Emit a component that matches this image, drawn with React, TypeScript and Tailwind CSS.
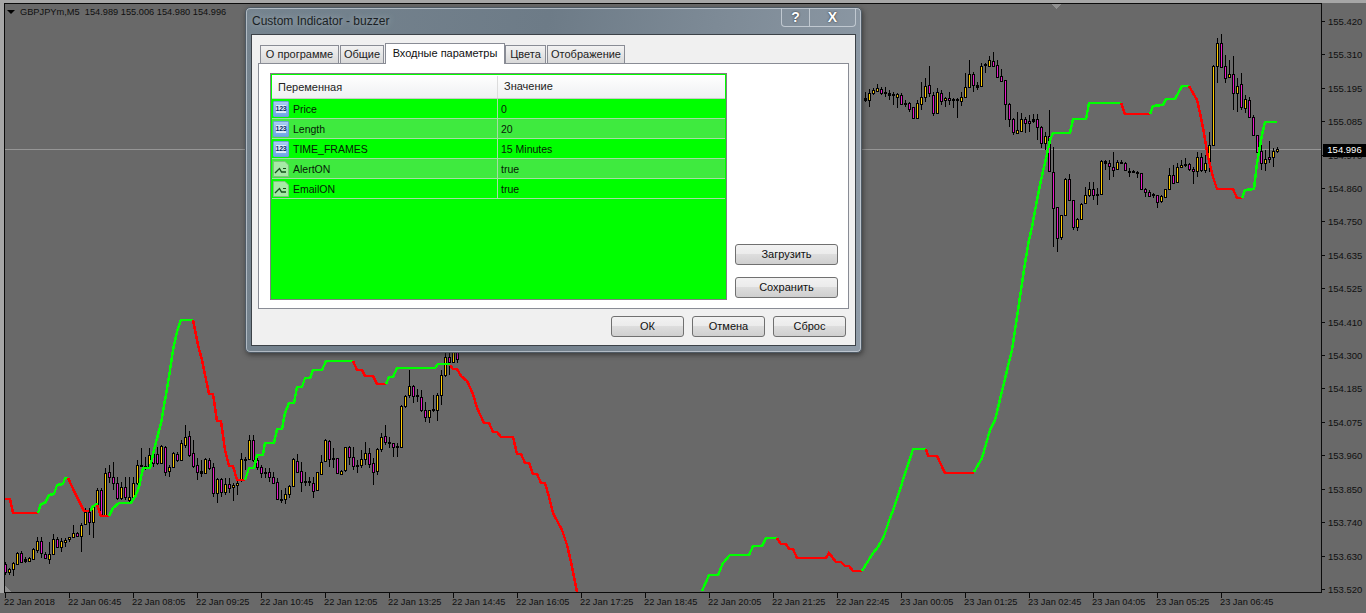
const font = "font-['Liberation_Sans',Arial,sans-serif]";

// candles as "wickTop bodyTop bodyBottom wickBottom colour", read off the chart in 3x zoom units
const leftCandles = `785 793 815 825 m,805 808 816 825 y,785 790 808 828 y,755 760 792 795 y,752 760 785 788 m,770 778 782 788 d,770 775 782 785 y,745 748 778 780 y,712 724 750 760 y,712 724 760 775 m,755 763 775 778 m,725 763 776 792 y,702 718 763 765 y,710 718 742 745 m,715 724 742 755 y,715 720 725 740 y,710 712 716 725 y,675 700 712 715 y,695 700 707 710 m,670 674 708 755 y,625 635 672 675 y,625 637 667 705 m,615 620 667 715 y,565 570 618 620 y,565 570 645 648 m,505 520 645 645 y,495 517 530 550 m,487 532 550 570 m,530 550 595 600 m,545 560 595 600 y,530 562 590 600 m,530 590 600 605 y,530 550 590 600 y,480 495 550 555 y,445 495 497 497 d,470 497 503 510 y,445 465 503 505 y,445 462 488 500 m,440 462 488 495 m,435 438 488 490 y,438 440 515 528 m,495 502 512 530 y,455 460 502 505 y,455 462 480 485 m,420 430 480 482 y,375 412 435 445 y,392 408 465 470 m,420 460 497 505 m,475 495 515 540 m,480 514 518 530 d,475 478 518 520 y,475 480 505 510 m,490 502 580 590 m,535 538 578 608 y,535 538 575 590 m,535 552 575 585 y,535 552 565 580 m,550 556 562 602 y,535 550 556 585 y,460 478 540 545 y,470 476 480 510 d,405 420 476 480 y,405 420 480 485 m,465 480 500 510 m,495 502 520 535 m,505 517 520 535 d,505 517 530 545 m,515 530 548 550 m,535 547 598 600 m,570 597 600 608 d,565 583 597 612 y,555 558 583 595 y,475 478 558 560 y,462 482 515 515 m,485 512 545 575 m,515 544 547 558 d,530 544 547 558 d,530 550 572 595 m,515 517 570 572 y,465 485 522 525 y,418 420 482 485 y,420 422 477 500 m,445 475 478 505 d,475 475 520 522 m,510 512 522 525 y,440 442 510 515 y,438 440 470 495 m,440 470 498 510 m,480 495 498 518 d,450 478 495 505 y,425 460 478 495 y,445 460 493 505 m,475 490 515 555 m,445 448 512 525 y,400 412 448 455 y,375 408 425 435 m,410 427 430 445 d,430 430 442 472 m,430 438 441 470 d,315 317 440 442 y,285 287 317 325 y,210 257 285 295 y,255 258 288 310 m,268 286 289 305 d,270 292 330 335 m,305 330 352 365 m,330 330 352 368 y,285 328 331 335 d,280 285 330 362 y,210 225 285 315 y,160 170 225 230 y,150 170 185 225 m,140 150 185 190 y,140 150 178 190 m`;

const midCandles = `125 145 149 155 d,118 130 150 170 y,115 120 130 135 y,102 115 122 125 y,110 118 128 135 m,112 126 128 140 d,120 130 135 150 d,125 132 136 165 d,130 133 140 175 y,130 135 162 165 m,150 160 163 172 d,155 160 176 185 m,170 172 205 208 m,150 160 205 208 y,95 140 163 180 y,85 107 140 155 y,48 105 130 140 m,125 135 190 198 m,115 127 190 192 y,120 130 152 165 m,140 144 150 170 y,125 145 151 165 m,145 148 150 175 d,145 147 150 205 d,125 142 152 168 y,70 112 142 145 y,30 72 112 115 y,65 72 106 125 m,95 105 110 120 d,40 48 107 110 y,40 42 45 70 d,18 30 47 50 y,5 33 47 50 m,30 45 80 82 m`;

const rightCandles = `207 228 242 245 m,240 240 313 360 m,310 313 358 382 m,355 358 395 405 m,335 390 398 402 y,340 358 392 395 y,350 358 368 400 m,345 362 368 395 m,342 358 362 370 d,342 358 380 420 m,378 380 428 445 m,395 408 428 450 y,330 408 512 512 m,440 517 625 742 m,620 622 715 755 m,645 645 710 720 y,535 538 645 648 y,522 538 600 600 m,600 600 680 690 m,655 658 680 692 y,610 612 658 660 y,560 585 610 610 y,545 568 585 590 y,545 568 585 600 m,565 582 585 615 d,480 484 583 585 y,480 484 488 510 d,480 488 498 540 m,455 500 510 530 m,480 487 508 510 y,480 485 488 492 d,485 488 510 512 m,505 512 514 530 d,510 512 516 520 m,512 516 520 535 m,518 520 568 570 m,565 568 575 590 m,570 575 588 592 m,580 582 585 595 d,585 585 605 625 m,585 588 604 608 y,568 568 592 595 y,505 525 568 570 y,495 525 548 550 m,490 500 545 548 y,480 496 500 505 y,475 492 495 500 d,490 492 508 512 m,500 508 514 552 m,455 472 512 530 y,460 472 510 515 m,465 490 510 520 y,395 435 485 515 y,195 198 435 438 y,115 130 198 248 y,102 130 202 205 m,165 198 235 248 m,180 222 232 235 y,168 222 280 330 m,235 258 280 335 y,220 252 322 330 m,285 298 325 340 y,290 300 352 355 m,345 352 405 408 m,405 405 455 480 m,420 453 490 510 m,450 478 490 512 y,422 472 478 490 m,445 453 472 500 y,440 448 454 460 y`;

type Candle = { x: number; wt: number; bt: number; bb: number; wb: number; c: string };

const parse = (src: string, start: number, toY: (z: number) => number): Candle[] =>
  src.split(",").map((item, i) => {
    const p = item.split(" ");
    return {
      x: 5 + 4 * (start + i),
      wt: Math.round(toY(+p[0])),
      bt: Math.round(toY(+p[1])),
      bb: Math.round(toY(+p[2])),
      wb: Math.round(toY(+p[3])),
      c: p[4],
    };
  });

const candles = [
  ...parse(leftCandles, 0, (z) => 300 + z / 3),
  ...parse(midCandles, 215, (z) => 50 + z / 3),
  ...parse(rightCandles, 249, (z) => z / 3),
];

const G = "#00ff00";
const R = "#ff0000";

const lines: [string, string][] = [
  [R, "5,499 10,499 13,513 38,513"],
  [G, "38,513 41,504 45,503 49,495 54,494 57,485 63,484 65,478 68,478"],
  [R, "68,478 75,493 80,503 84,511 89,511"],
  [G, "91,511 92,507 97,504 98,504"],
  [R, "97,505 101,516 109,516"],
  [G, "109,516 113,508 119,503 131,503 135,497 139,487 143,468 150,468 154,450 161,423 165,400 169,377 173,350 177,332 181,320 193,320"],
  [R, "193,320 198,345 202,360 209,394 213,394 217,421 221,421 225,450 229,466 233,466 237,480 245,480"],
  [G, "245,480 249,468 254,468 257,455 263,455 265,443 274,443 277,429 282,429 285,413 289,403 294,403 297,387 302,387 305,378 310,378 313,370 322,370 326,361 353,361"],
  [R, "353,361 357,370 362,370 365,376 373,376 377,384 386,384"],
  [G, "386,384 389,377 393,377 397,368 435,368 438,364 450,364"],
  [R, "450,365 453,369 457,369 461,376 467,381 473,394 477,408 484,423 489,423 493,432 497,432 501,437 513,437 517,454 521,454 525,463 529,463 533,474 537,474 541,483 545,483 549,497 553,513 562,530 567,545 571,562 577,592"],
  [G, "702,591 709,575 718,575 723,563 730,555 749,555 753,546 762,546 766,538 777,538"],
  [R, "777,538 781,544 786,544 789,549 793,549 797,558 826,558 829,553 836,562 841,562 845,566 849,566 853,571 862,571"],
  [G, "862,571 873,553 878,547 884,536 890,518 894,508 902,483 913,449 926,449"],
  [R, "926,449 928,456 937,456 945,473 974,473"],
  [G, "974,472 982,458 990,430 995,420 1003,387 1012,350 1020,297 1025,263 1029,240 1032,227 1037,200 1041,180 1045,163 1050,140 1053,133 1070,133 1073,119 1086,119 1089,103 1121,103"],
  [R, "1121,103 1125,114 1150,114"],
  [G, "1150,114 1153,106 1163,105 1166,99 1175,99 1182,86 1189,86"],
  [R, "1189,86 1197,100 1200,113 1204,133 1208,157 1213,177 1217,189 1233,189 1237,198 1242,198"],
  [G, "1242,198 1245,190 1254,189 1257,163 1262,135 1265,122 1277,122"],
];

const prices = ["155.420", "155.310", "155.195", "155.085", "154.970", "154.860", "154.750", "154.635", "154.525", "154.410", "154.300", "154.185", "154.075", "153.960", "153.850", "153.740", "153.630", "153.520"];

const times = ["22 Jan 2018", "22 Jan 06:45", "22 Jan 08:05", "22 Jan 09:25", "22 Jan 10:45", "22 Jan 12:05", "22 Jan 13:25", "22 Jan 14:45", "22 Jan 16:05", "22 Jan 17:25", "22 Jan 18:45", "22 Jan 20:05", "22 Jan 21:25", "22 Jan 22:45", "23 Jan 00:05", "23 Jan 01:25", "23 Jan 02:45", "23 Jan 04:05", "23 Jan 05:25", "23 Jan 06:45"];

const params = [
  { name: "Price", value: "0", kind: "num" },
  { name: "Length", value: "20", kind: "num" },
  { name: "TIME_FRAMES", value: "15 Minutes", kind: "num" },
  { name: "AlertON", value: "true", kind: "bool" },
  { name: "EmailON", value: "true", kind: "bool" },
];

const tabs = [
  { label: "О программе", w: "w-[79px]" },
  { label: "Общие", w: "w-[44px]" },
  { label: "Входные параметры", w: "w-[120px]", active: true },
  { label: "Цвета", w: "w-[41px]" },
  { label: "Отображение", w: "w-[78px]" },
];

const Chart = () => (
  <svg viewBox="5 4 1316 588" width={1316} height={588} shapeRendering="crispEdges" className="block">
    <rect x="5" y="149" width="1316" height="1" fill="#959595" />
    <polygon points="1051,4 1061,4 1056,9" fill="#8f8f8f" />
    <polygon points="5,586 5,592 11,592" fill="#8f8f8f" />
    {candles.map((k) => (
      <g key={k.x}>
        <rect x={k.x} y={k.wt} width="1" height={Math.max(k.wb - k.wt, 1)} fill="#000" />
        <rect x={k.x - 1} y={k.bt} width="3" height={Math.max(k.bb - k.bt + 1, 2)} fill="#000" />
        {k.c !== "d" && k.bb - k.bt > 1 && (
          <rect x={k.x} y={k.bt + 1} width="1" height={k.bb - k.bt - 1} fill={k.c === "y" ? "#ffcc00" : "#e619c8"} />
        )}
      </g>
    ))}
    {lines.map(([color, pts], i) => (
      <polyline key={i} points={pts} fill="none" stroke={color} strokeWidth="2.5" />
    ))}
  </svg>
);

const NumIcon = () => (
  <span className="relative flex h-[16px] w-[16px] shrink-0 items-center justify-center rounded-[1px] border border-[#6fa0d8] bg-linear-to-b from-[#a9cdf2] to-[#6fa6e6]">
    <span className="bg-[#dcebfb] text-[7px] leading-[8px] font-bold tracking-[-0.3px] text-[#0c2c66]">123</span>
  </span>
);

const BoolIcon = () => (
  <svg width="16" height="16" viewBox="0 0 16 16" className="shrink-0">
    <path d="M0.5 0.5H12L15.5 4V15.5H0.5Z" fill="#a6eaa6" stroke="#7cc47c" />
    <path d="M2 12L6.5 7.5L8.5 11H13" fill="none" stroke="#14501a" strokeWidth="1.3" />
    <path d="M10 7.5H13" fill="none" stroke="#14501a" strokeWidth="1" />
  </svg>
);

const Btn = ({ label, className }: { label: string; className: string }) => (
  <button className={`flex h-[21px] items-center justify-center rounded-[3px] border border-[#707070] bg-[linear-gradient(#f2f2f2,#ebebeb_48%,#dddddd_50%,#cfcfcf)] text-[11px] text-[#111] ${className}`}>
    {label}
  </button>
);

const Dialog = () => (
  <div className="absolute top-[7px] left-[245px] flex h-[346px] w-[617px] flex-col rounded-[5px] border border-[#4f5a64] bg-[linear-gradient(100deg,#76848f,#6d7b87_45%,#7d8a96_70%,#8f9ba7)] px-[5px] pb-[6px] shadow-[1px_2px_5px_rgba(30,30,30,0.6),inset_0_0_0_1px_rgba(225,232,238,0.55)]">
    <div className="flex h-[26px] shrink-0 items-start justify-between">
      <span className="pt-[5px] pl-[1px] text-[12px] leading-[16px] text-[#1a1f24] [text-shadow:0_0_6px_rgba(230,235,240,0.55)]">Custom Indicator - buzzer</span>
      <div className="flex h-[19px] w-[75px] rounded-b-[4px] border border-t-0 border-[#c0c8d0] font-bold text-white [text-shadow:0_0_2px_#222]">
        <span className="flex w-[28px] items-center justify-center border-r border-[#c0c8d0] text-[14px]">?</span>
        <span className="flex flex-1 items-center justify-center text-[14px]">X</span>
      </div>
    </div>
    <div className="flex flex-1 flex-col border border-[#3c4248] bg-[#f0f0f0] px-[6px] pt-[8px]">
      <div className="flex h-[20px] items-end pl-[2px]">
        {tabs.map((t) =>
          t.active ? (
            <div key={t.label} className={`relative z-10 -mb-[1px] flex h-[21px] items-center justify-center border border-b-0 border-[#898c95] bg-white pb-[1px] text-[11px] text-[#111] ${t.w}`}>
              {t.label}
            </div>
          ) : (
            <div key={t.label} className={`mr-[1px] flex h-[18px] items-center justify-center border border-b-0 border-[#898c95] bg-linear-to-b from-[#f2f2f2] to-[#d9d9d9] text-[11px] text-[#222] ${t.w}`}>
              {t.label}
            </div>
          )
        )}
      </div>
      <div className="flex h-[246px] gap-[8px] border border-[#898c95] bg-white pt-[9px] pl-[11px]">
        <div className="flex h-[227px] w-[457px] flex-col border border-[#7f7f7f] bg-[#00ff00] p-[1px]">
          <div className="flex h-[24px] shrink-0 items-center border-b border-[#c8c8c8] bg-linear-to-b from-white to-[#eff0f2] text-[11px] text-[#222]">
            <span className="w-[226px] border-r border-[#dcdcdc] pl-[6px] leading-[22px]">Переменная</span>
            <span className="pl-[6px]">Значение</span>
          </div>
          {params.map((p, i) => (
            <div key={p.name} className={`flex h-[20px] shrink-0 items-center border-b border-[#a5dca5] text-[10.5px] text-[#062006] ${i % 2 ? "bg-[#3fea3f]" : "bg-[#00ff00]"}`}>
              <span className="flex h-full w-[226px] items-center gap-[4px] border-r border-[#a5dca5] pl-[1px]">
                {p.kind === "num" ? <NumIcon /> : <BoolIcon />}
                <span className="pt-[2px]">{p.name}</span>
              </span>
              <span className="pt-[2px] pl-[3px]">{p.value}</span>
            </div>
          ))}
        </div>
        <div className="flex h-[227px] flex-col justify-end gap-[12px] pb-[2px]">
          <Btn label="Загрузить" className="w-[103px]" />
          <Btn label="Сохранить" className="w-[103px]" />
        </div>
      </div>
      <div className="flex justify-end gap-[8px] pt-[7px] pr-[3px]">
        <Btn label="ОК" className="w-[73px]" />
        <Btn label="Отмена" className="w-[73px]" />
        <Btn label="Сброс" className="w-[73px]" />
      </div>
    </div>
  </div>
);

export default function App() {
  return (
    <div className={`relative flex h-[613px] w-[1366px] flex-col overflow-hidden bg-[#696969] text-[#111] ${font}`}>
      <div className="h-[3px] shrink-0 bg-[#a6a6a6]" />
      <div className="flex h-[590px] shrink-0">
        <div className="w-[4px] shrink-0 bg-[#a6a6a6]" />
        <div className="relative h-[590px] w-[1318px] shrink-0 overflow-hidden border border-[#0a0a0a]">
          <Chart />
        </div>
        <div className="flex h-[590px] flex-1 flex-col pt-[13px] text-[9.5px] leading-[12px] text-[#101010]">
          {prices.map((p) => (
            <div key={p} className="flex h-[33.41px] shrink-0 items-start">
              <span className="mt-[5px] mr-[3px] h-[1px] w-[3px] bg-[#0a0a0a]" />
              {p}
            </div>
          ))}
        </div>
      </div>
      <div className="grid grid-cols-[repeat(20,64px)] pl-[5px] text-[9.25px] leading-[12px] text-[#101010]">
        {times.map((t) => (
          <div key={t} className="relative h-[20px] pt-[3px]">
            <span className="absolute top-0 left-0 h-[5px] w-[1px] bg-[#0a0a0a]" />
            <span className="-ml-[1px] whitespace-nowrap">{t}</span>
          </div>
        ))}
      </div>

      <div className="absolute top-[5px] left-[7px] flex items-center gap-[5px] text-[9.25px] leading-[14px] text-[#101010]">
        <span className="h-0 w-0 border-x-[4px] border-t-[4px] border-x-transparent border-t-black" />
        <span className="whitespace-pre">GBPJPYm,M5  154.989 155.006 154.980 154.996</span>
      </div>
      <div className="absolute top-[144px] left-[1323px] flex h-[13px] w-[43px] items-center justify-center bg-black text-[9.5px] text-white">154.996</div>
      <Dialog />
    </div>
  );
}
